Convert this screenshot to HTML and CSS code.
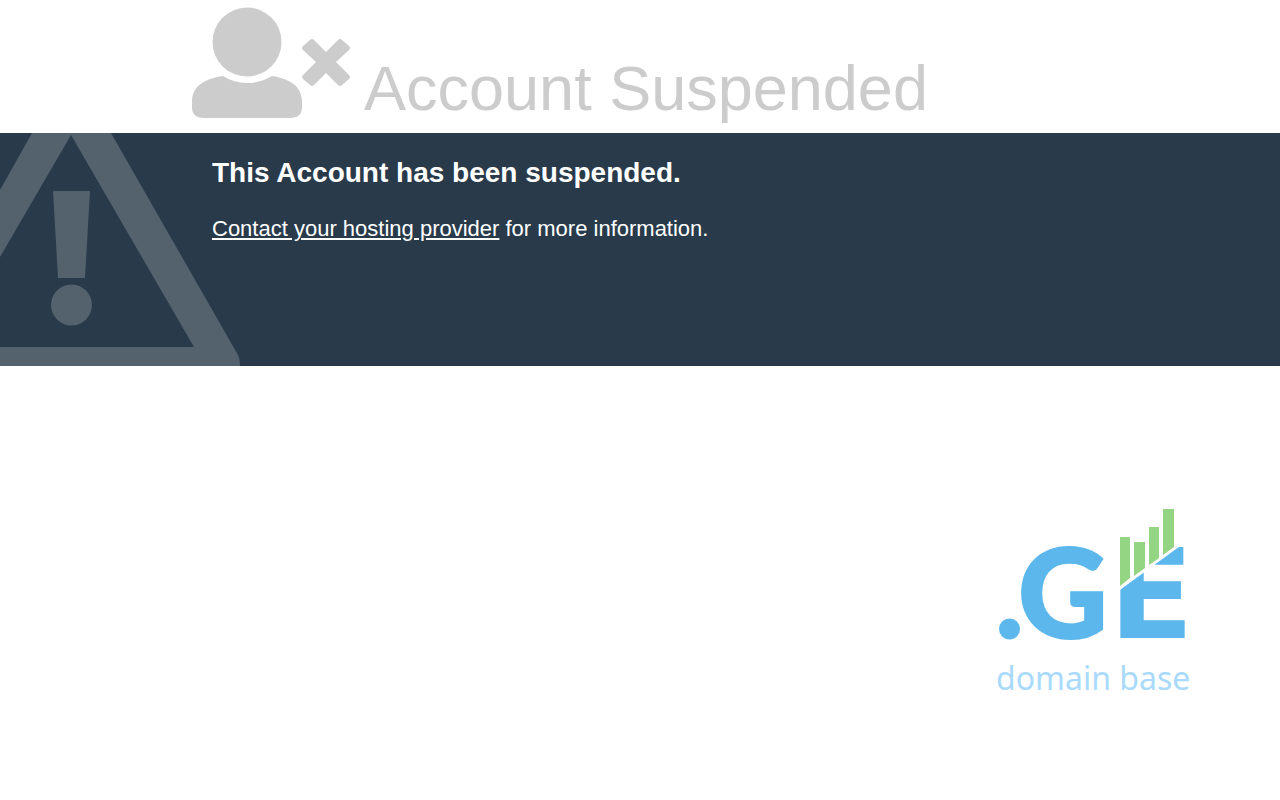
FILE: index.html
```html
<!DOCTYPE html>
<html lang="en">
<head>
<meta charset="utf-8">
<meta name="viewport" content="width=device-width, initial-scale=1">
<title>Account Suspended</title>
<link rel="stylesheet" href="styles.css">
</head>
<body>
<header class="page-header container">
  <svg class="user-icon" viewBox="0 0 158 110" aria-hidden="true">
    <circle cx="55" cy="34" r="34.5"/>
    <path d="M31 68Q42 75 55 75T80 68C98 71 110 78 110 94V99Q110 110 98 110H12Q0 110 0 99V94C0 78 12 71 31 68Z"/>
    <path d="M111 42Q109 40 111 38L118 32Q120 30 122 32L134 44L146 32Q148 30 150 32L157 38Q159 40 157 42L144 54L157 67Q159 69 157 71L150 77Q148 79 146 77L134 65L122 77Q120 79 118 77L111 71Q109 69 111 67L124 54Z"/>
  </svg>
  <h1 class="page-title">Account Suspended</h1>
</header>
<main>
  <section class="notice">
    <svg class="warning-icon" viewBox="0 0 240 233" aria-hidden="true">
      <path fill-rule="evenodd" d="M32 0H111L238 222Q240 226 240 233H0V214H194L71 2L0 124V57Z"/>
      <path d="M53 58H90L85 145H58Z"/>
      <circle cx="71.5" cy="172" r="20.5"/>
    </svg>
    <div class="container">
      <div class="notice-text">
        <h2 class="notice-title">This Account has been suspended.</h2>
        <p class="notice-info"><a class="notice-link" href="#">Contact your hosting provider</a> for more information.</p>
      </div>
    </div>
  </section>
</main>
<footer class="page-footer">
  <div class="brand">
    <svg class="brand-mark" viewBox="0 0 200 140" role="img" aria-label=".GE">
      <defs>
        <clipPath id="rise"><path d="M110 94L187 38V0H210V180H110Z"/></clipPath>
      </defs>
      <circle class="brand-blue" cx="13.5" cy="123" r="10.5"/>
      <text class="brand-letter brand-letter-g" x="22" y="132">G</text>
      <text class="brand-letter brand-letter-e" x="113" y="132" clip-path="url(#rise)">E</text>
      <path class="brand-green" d="M124 31H134V72L124 80ZM138 36H149V62L138 70ZM153 21H163V52L153 59ZM167 3H178V41L167 49Z"/>
    </svg>
    <p class="brand-name">domain base</p>
  </div>
</footer>
</body>
</html>
```
FILE: styles.css
```css
body {
  margin: 0;
  background: #fff;
  color: #ccc;
  font-family: "Liberation Sans", Arial, sans-serif;
}

.container {
  padding: 0 15%;
}

.page-header {
  display: flex;
  align-items: flex-end;
  gap: 14px;
  padding-top: 8px;
  padding-bottom: 9px;
}

.user-icon {
  flex: none;
  width: 158px;
  margin-bottom: 6px;
  overflow: visible;
  fill: #ccc;
}

.page-title {
  margin: 0;
  font-size: 63px;
  font-weight: 400;
  line-height: 72px;
}

.notice {
  position: relative;
  min-height: 233px;
  overflow: hidden;
  background: #293a4a;
  color: #fff;
}

.warning-icon {
  position: absolute;
  top: 0;
  left: 0;
  width: 240px;
  fill: #54626e;
}

.notice-text {
  position: relative;
  padding: 24px 20px;
}

.notice-title {
  margin: 0 0 24px;
  font-size: 28px;
  line-height: 32px;
}

.notice-info {
  margin: 0;
  font-size: 22px;
  line-height: 32px;
}

.notice-link {
  color: inherit;
}

.page-footer {
  display: flex;
  justify-content: flex-end;
  padding: 140px 84px 40px;
}

.brand {
  width: 200px;
}

.brand-mark {
  display: block;
  width: 100%;
  overflow: visible;
}

.brand-blue {
  fill: #5cb7ec;
}

.brand-green {
  fill: #93d582;
}

.brand-letter {
  fill: #5cb7ec;
  stroke: #5cb7ec;
}

.brand-letter-g {
  font-family: Lato, sans-serif;
  font-size: 124px;
  font-weight: 900;
  stroke-width: 2px;
}

.brand-letter-e {
  font-family: "DejaVu Sans", sans-serif;
  font-size: 124px;
  font-weight: 700;
  stroke-width: 0;
}

.brand-name {
  margin: 8px 0 0;
  color: #a9dafb;
  font-family: "Noto Sans", sans-serif;
  font-size: 32px;
  line-height: 48px;
  white-space: nowrap;
}
```
